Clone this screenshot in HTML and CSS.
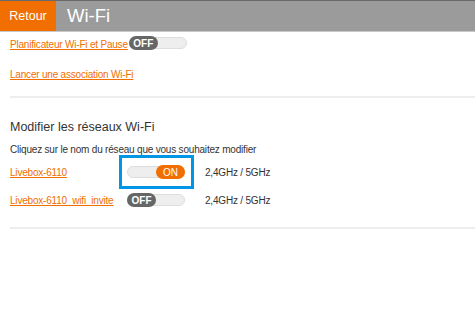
FILE: index.html
```html
<!DOCTYPE html>
<html lang="fr">
<head>
<meta charset="UTF-8">
<title>Wi-Fi</title>
<link rel="stylesheet" href="styles.css">
</head>
<body>

<div class="topbar">
  <a href="#" class="back">Retour</a>
  <div class="title">Wi-Fi</div>
</div>

<div class="content">
  <div class="section top">
    <div class="line first">
      <a href="#" class="link">Planificateur Wi-Fi et Pause</a><span class="toggle off"><span class="knob">OFF</span></span>
    </div>
    <div class="line">
      <a href="#" class="link">Lancer une association Wi-Fi</a>
    </div>
  </div>

  <div class="section">
    <h2>Modifier les réseaux Wi-Fi</h2>
    <p class="hint">Cliquez sur le nom du réseau que vous souhaitez modifier</p>
    <div class="net">
      <a href="#" class="link net-name">Livebox-6110</a>
      <span class="focus"><span class="toggle on"><span class="knob">ON</span></span></span>
      <span class="band">2,4GHz / 5GHz</span>
    </div>
    <div class="net">
      <a href="#" class="link net-name">Livebox-6110_wifi_invite</a>
      <span class="nofocus"><span class="toggle off"><span class="knob">OFF</span></span></span>
      <span class="band">2,4GHz / 5GHz</span>
    </div>
  </div>
</div>

</body>
</html>
```

FILE: styles.css
```css
body {
  margin: 0;
  padding: 0;
  background: white;
  font-family: 'Liberation Sans', Arial, sans-serif;
  color: #333;
}
.topbar {
  display: flex;
  height: 30px;
  background: #9b9b9b;
  border-top: 1px solid #6a6a6a;
  border-bottom: 1px solid #c8c8c8;
}
.back {
  width: 56px;
  background: #f16e00;
  color: white;
  font-size: 12.5px;
  text-decoration: none;
  display: flex;
  align-items: center;
  justify-content: center;
}
.title {
  color: white;
  font-size: 18.5px;
  padding-left: 11px;
  line-height: 29px;
}
.content {
  padding-left: 10px;
}
.section {
  border-bottom: 2px solid #eee;
  padding-bottom: 13px;
}
.section.top {
  padding-bottom: 16px;
}
.line {
  height: 30px;
  display: flex;
  align-items: flex-end;
}
.line.first {
  height: 18px;
}
.link, .hint, .band {
  font-size: 10px;
  letter-spacing: -0.2px;
}
.link {
  color: #f16e00;
  text-decoration: underline;
}
.toggle {
  display: inline-flex;
  width: 58px;
  height: 12px;
  background: #eee;
  border: 1px solid #ddd;
  border-radius: 7px;
  box-sizing: border-box;
  letter-spacing: 0;
}
.toggle .knob {
  width: 29px;
  height: 14px;
  margin-top: -2px;
  border-radius: 7px;
  color: white;
  font-size: 10px;
  font-weight: bold;
  display: flex;
  align-items: center;
  justify-content: center;
}
.toggle.off .knob {
  background: #666;
  margin-left: -1px;
}
.toggle.on .knob {
  background: #f16e00;
  margin-left: auto;
  margin-right: -1px;
  font-weight: normal;
}
.line.first .toggle {
  margin-left: 1px;
  margin-bottom: 1px;
}
h2 {
  font-size: 12.5px;
  font-weight: normal;
  margin: 0;
  padding-top: 22px;
}
.hint {
  margin: 10px 0 3px;
}
.net {
  display: flex;
  align-items: center;
  height: 28px;
}
.net-name {
  width: 109px;
}
.focus, .nofocus {
  display: inline-flex;
  align-items: center;
  padding: 8px 6px 8px 5px;
  border: 3px solid transparent;
}
.focus {
  border-color: #0096e6;
}
.band {
  margin-left: 11px;
}
```
